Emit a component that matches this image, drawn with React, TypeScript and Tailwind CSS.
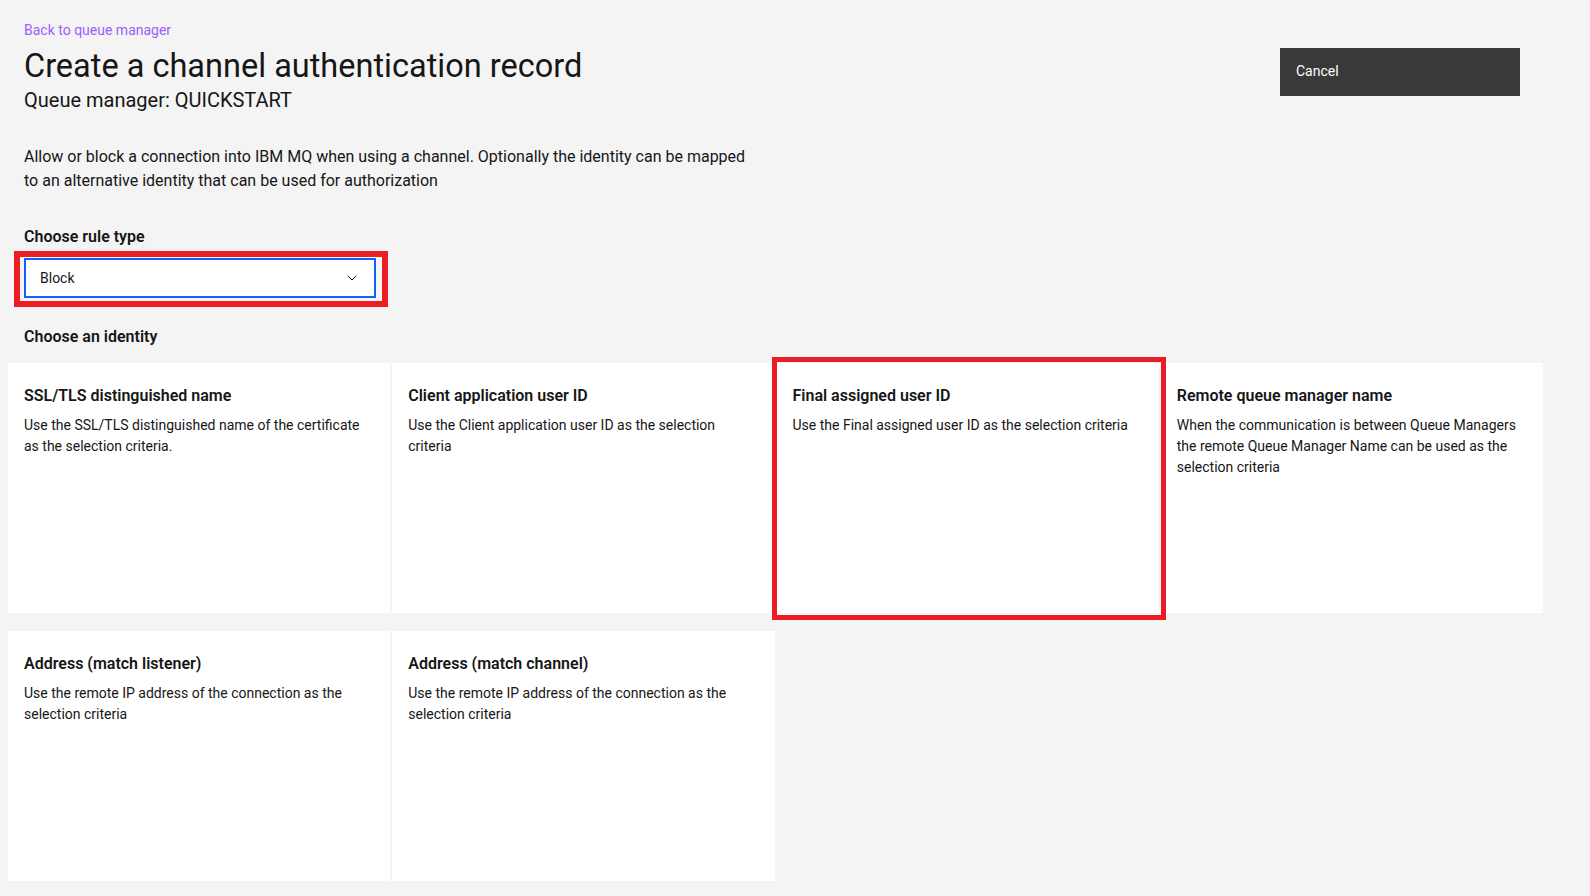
import { ChevronDown } from 'lucide-react';

interface IdentityOption {
    id: string;
    title: string;
    description: string;
}

const IDENTITIES: IdentityOption[] = [
    { id: 'ssl', title: 'SSL/TLS distinguished name', description: 'Use the SSL/TLS distinguished name of the certificate as the selection criteria.' },
    { id: 'client', title: 'Client application user ID', description: 'Use the Client application user ID as the selection criteria' },
    { id: 'final', title: 'Final assigned user ID', description: 'Use the Final assigned user ID as the selection criteria' },
    { id: 'remote', title: 'Remote queue manager name', description: 'When the communication is between Queue Managers the remote Queue Manager Name can be used as the selection criteria' },
    { id: 'listener', title: 'Address (match listener)', description: 'Use the remote IP address of the connection as the selection criteria' },
    { id: 'channel', title: 'Address (match channel)', description: 'Use the remote IP address of the connection as the selection criteria' },
];

export default function App() {
    const highlighted = 'final';

    return (
        <div className="min-h-screen w-full bg-[#f4f4f4] text-[#161616] font-['Roboto',sans-serif]">
            {/* Header */}
            <div className="flex items-start justify-between pl-[24px] pr-[70px] pt-[21px]">
                <div>
                    <a href="#" className="block text-sm leading-[18px] text-[#9d5ffb]">Back to queue manager</a>
                    <h1 className="mt-[7px] text-[32.5px] leading-[40px] font-normal">Create a channel authentication record</h1>
                    <p className="text-[20px] leading-[28px]">Queue manager: QUICKSTART</p>
                </div>
                <button className="mt-[27px] h-[48px] w-[240px] bg-[#393939] pb-[2px] pl-[16px] text-left text-sm text-white">
                    Cancel
                </button>
            </div>

            <div className="pl-[24px]">
                <p className="mt-[31px] w-[735px] text-base leading-6">
                    Allow or block a connection into IBM MQ when using a channel. Optionally the identity can be mapped to an alternative identity that can be used for authorization
                </p>

                <p className="mt-[32px] text-base leading-6 font-semibold">Choose rule type</p>
                <div className="relative mt-[9px] w-[352px]">
                    <div className="flex h-[40px] items-center justify-between border-2 border-[#0f62fe] bg-white pl-[14px] pr-[14px] text-sm">
                        <span>Block</span>
                        <ChevronDown size={16} strokeWidth={1.5} className="text-[#161616]" />
                    </div>
                    {/* annotation */}
                    <div className="pointer-events-none absolute -left-[10px] -top-[7px] -right-[12px] -bottom-[9px] z-10 border-[6px] border-[#ec1c24]" />
                </div>

                <p className="mt-[27px] text-base leading-6 font-semibold">Choose an identity</p>
            </div>

            {/* Identity tiles */}
            <div className="ml-[8px] mt-[14px] grid w-[1535px] grid-cols-4 gap-x-[2px] gap-y-[18px] pb-[15px]">
                {IDENTITIES.map(item => (
                    <div key={item.id} className={`relative h-[250px] bg-white px-[16px] pt-[21px] ${item.id === highlighted ? 'z-10' : ''}`}>
                        <h3 className="text-base leading-6 font-semibold">{item.title}</h3>
                        <p className="mt-[7px] pr-[8px] text-sm leading-[21px]">{item.description}</p>
                        {item.id === highlighted && (
                            <div className="pointer-events-none absolute -left-[5px] -top-[6px] -right-[7px] -bottom-[7px] border-[5px] border-[#ec1c24]" />
                        )}
                    </div>
                ))}
            </div>
        </div>
    );
}
